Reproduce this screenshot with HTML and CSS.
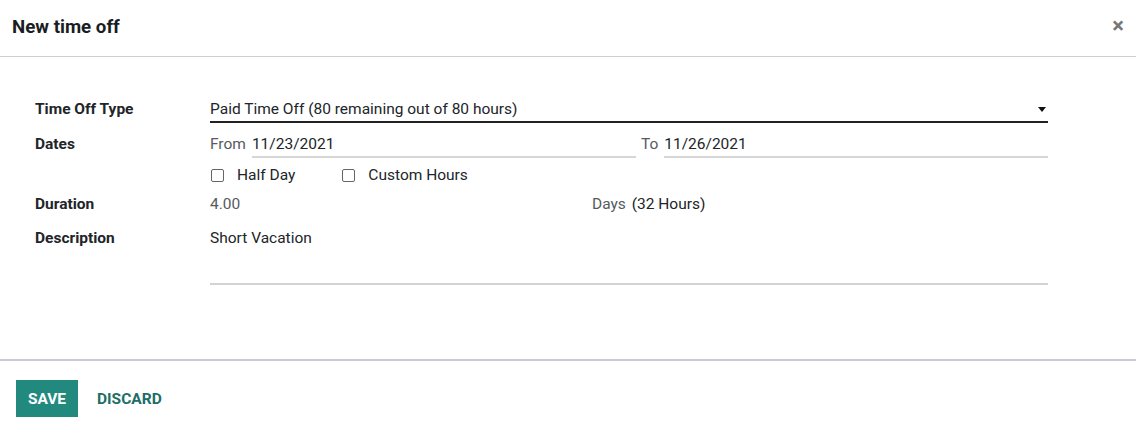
FILE: index.html
```html
<!DOCTYPE html>
<html>
<head>
<meta charset="utf-8">
<link rel="stylesheet" href="styles.css">
</head>
<body>
<div class="modal">
  <header class="modal-header">
    <h4 class="modal-title">New time off</h4>
    <span class="close">&#215;</span>
  </header>
  <main class="modal-body">
    <div class="row row-type">
      <div class="label">Time Off Type</div>
      <div class="value field select">
        <span>Paid Time Off (80 remaining out of 80 hours)</span>
        <span class="caret"></span>
      </div>
    </div>
    <div class="row row-dates">
      <div class="label">Dates</div>
      <div class="value dates">
        <span class="muted">From</span>
        <div class="field date-field">11/23/2021</div>
        <span class="muted">To</span>
        <div class="field date-field">11/26/2021</div>
      </div>
    </div>
    <div class="row row-checks">
      <div class="label"></div>
      <div class="value checks">
        <label class="check"><span class="box"></span>Half Day</label>
        <label class="check"><span class="box"></span>Custom Hours</label>
      </div>
    </div>
    <div class="row row-duration">
      <div class="label">Duration</div>
      <div class="value duration">
        <span class="muted num">4.00</span>
        <span class="days"><span class="muted">Days</span> (32 Hours)</span>
      </div>
    </div>
    <div class="row row-desc">
      <div class="label">Description</div>
      <div class="value field textarea">Short Vacation</div>
    </div>
  </main>
  <footer class="modal-footer">
    <button class="btn btn-primary">SAVE</button>
    <button class="btn btn-link">DISCARD</button>
  </footer>
</div>
</body>
</html>
```
FILE: styles.css
```css
* { box-sizing: border-box; }
html, body { margin: 0; padding: 0; background: #fff; }
body {
  font-family: Roboto, "Liberation Sans", sans-serif;
  font-size: 15.5px;
  color: #212529;
  width: 1136px;
  height: 434px;
  overflow: hidden;
}
.modal { display: flex; flex-direction: column; height: 434px; }
.modal-header {
  height: 57px;
  display: flex;
  align-items: center;
  justify-content: space-between;
  padding: 0 12px 2px 12px;
  border-bottom: 1px solid #cfcfcf;
}
.modal-title {
  margin: 0;
  font-size: 18.7px;
  font-weight: 700;
  color: #1a1d23;
}
.close {
  font-size: 22px;
  font-weight: 700;
  color: #777;
  line-height: 1;
  margin-top: -3px;
}
.modal-body {
  height: 302px;
  padding: 39px 0 0 35px;
}
.row { display: flex; }
.label {
  width: 175px;
  flex: none;
  font-weight: 700;
  color: #212529;
}
.value { width: 838px; flex: none; }
.field { border-bottom: 1px solid #ccc; }
.row-type { height: 27px; }
.row-type .label { padding-top: 4px; }
.select {
  height: 27px;
  border-bottom: 2px solid #222;
  display: flex;
  justify-content: space-between;
  align-items: flex-start;
  padding-top: 4px;
}
.caret {
  width: 0; height: 0;
  border-left: 4px solid transparent;
  border-right: 4px solid transparent;
  border-top: 5px solid #111;
  margin-top: 7px;
  margin-right: 2px;
}
.row-dates { margin-top: 8px; height: 27px; }
.row-dates .label { padding-top: 4px; }
.dates { display: flex; align-items: flex-start; }
.muted { color: #555a60; }
.dates .muted { padding-top: 4px; margin-right: 6px; }
.date-field {
  height: 27px;
  padding-top: 4px;
  border-bottom: 2px solid #d6d6d6;
}
.dates .date-field:nth-of-type(1) { width: 384px; margin-right: 5px; }
.dates .date-field:nth-of-type(2) { flex: 1; }
.row-checks { margin-top: 6px; height: 22px; }
.checks { display: flex; align-items: center; gap: 0; }
.check { display: flex; align-items: center; margin-right: 46px; }
.check .box {
  width: 13px; height: 13px;
  border: 1.5px solid #666;
  border-radius: 2px;
  margin-left: 1px;
  margin-right: 13px;
}
.row-duration { margin-top: 6px; height: 24px; align-items: center; }
.duration { display: flex; }
.duration .num { width: 382px; }
.days .muted { margin-right: 2px; }
.row-desc { margin-top: 10px; }
.row-desc .label { padding-top: 3px; }
.textarea {
  height: 59px;
  padding-top: 3px;
  border-bottom: 2px solid #d3d3d3;
}
.modal-footer {
  border-top: 2px solid #c9ccd2;
  display: flex;
  align-items: flex-start;
  padding: 19px 16px 0 16px;
  gap: 0;
}
.btn {
  font-family: Roboto, "Liberation Sans", sans-serif;
  font-size: 15.5px;
  font-weight: 700;
  border: none;
  cursor: pointer;
  height: 37px;
}
.btn-primary {
  background: #22897f;
  color: #fff;
  width: 62px;
  padding: 0;
}
.btn-link {
  background: transparent;
  color: #1c6e66;
  padding: 0 0 0 19px;
}
```
